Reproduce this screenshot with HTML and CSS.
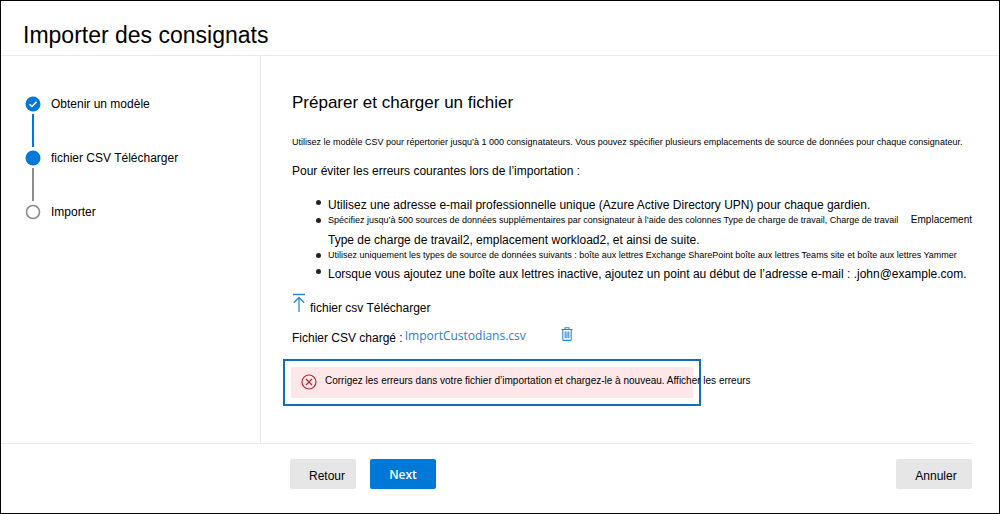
FILE: index.html
```html
<!DOCTYPE html>
<html lang="fr">
<head>
<meta charset="utf-8">
<meta name="viewport" content="width=device-width, initial-scale=1">
<title>Importer des consignats</title>
<link rel="stylesheet" href="styles.css">
</head>
<body>
<div class="wizard">
  <header class="header"><h1 class="title">Importer des consignats</h1></header>
  <div class="body">
    <nav class="sidebar" aria-label="Étapes">
      <ol class="steps">
        <li class="step step-done">
          <svg class="marker" viewBox="0 0 16 16" aria-hidden="true"><circle cx="8" cy="8" r="7.5" fill="#0078d7"/><path d="M4.600 8.200 7 10.500 11.600 5.800" fill="none" stroke="#fff" stroke-width="1.500"/></svg>
          <span>Obtenir un modèle</span>
        </li>
        <li class="step step-current" aria-current="step">
          <svg class="marker" viewBox="0 0 16 16" aria-hidden="true"><circle cx="8" cy="8" r="7.5" fill="#0078d7"/></svg>
          <span>fichier CSV Télécharger</span>
        </li>
        <li class="step">
          <svg class="marker" viewBox="0 0 16 16" aria-hidden="true"><circle cx="8" cy="8" r="6.5" fill="#fff" stroke="#8c8c8c" stroke-width="1.6"/></svg>
          <span>Importer</span>
        </li>
      </ol>
    </nav>
    <main class="content">
      <h2 class="heading">Préparer et charger un fichier</h2>
      <p class="intro">Utilisez le modèle CSV pour répertorier jusqu’à 1 000 consignatateurs. Vous pouvez spécifier plusieurs emplacements de source de données pour chaque consignateur.</p>
      <p class="lead">Pour éviter les erreurs courantes lors de l’importation :</p>
      <ul class="tips">
        <li class="tip">Utilisez une adresse e-mail professionnelle unique (Azure Active Directory UPN) pour chaque gardien.</li>
        <li class="tip tip-small">
          <div class="split"><span>Spécifiez jusqu’à 500 sources de données supplémentaires par consignateur à l’aide des colonnes Type de charge de travail, Charge de travail</span><span class="location">Emplacement</span></div>
          <div class="continued">Type de charge de travail2, emplacement workload2, et ainsi de suite.</div>
        </li>
        <li class="tip tip-small">Utilisez uniquement les types de source de données suivants : boîte aux lettres Exchange SharePoint boîte aux lettres Teams site et boîte aux lettres Yammer</li>
        <li class="tip tip-last">Lorsque vous ajoutez une boîte aux lettres inactive, ajoutez un point au début de l’adresse e-mail : .john@example.com.</li>
      </ul>
      <button class="upload" type="button">
        <svg class="upload-icon" viewBox="0 0 14 20" aria-hidden="true"><path d="M1 1.5H13M7 19V4.500M1.800 9.700 7 4.500 12.200 9.700" fill="none" stroke="#2b88d8" stroke-width="1.3"/></svg>
        <span>fichier csv Télécharger</span>
      </button>
      <div class="file">
        <span class="file-label">Fichier CSV chargé :</span>
        <a class="file-link" href="#">ImportCustodians.csv</a>
        <button class="delete" type="button" aria-label="Supprimer">
          <svg class="trash" viewBox="0 0 12 14" aria-hidden="true"><path d="M.5 2.500H11.500M4 2.500V.800H8V2.500M1.800 2.500V12.400Q1.800 13.400 2.800 13.400H9.200Q10.200 13.400 10.200 12.400V2.500M4.200 4.500V11.300M6 4.500V11.300M7.800 4.500V11.300" fill="none" stroke="#2b88d8" stroke-width="1.100"/></svg>
        </button>
      </div>
      <div class="alert-frame">
        <div class="alert" role="alert">
          <svg class="alert-icon" viewBox="0 0 16 16" aria-hidden="true"><path d="M8 1A7 7 0 1 1 8 15A7 7 0 1 1 8 1M5 5 11 11M11 5 5 11" fill="none" stroke="#b02a37" stroke-width="1.200"/></svg>
          <span class="alert-text">Corrigez les erreurs dans votre fichier d’importation et chargez-le à nouveau. Afficher les erreurs</span>
        </div>
      </div>
    </main>
  </div>
  <footer class="footer">
    <button class="btn btn-back" type="button">Retour</button>
    <button class="btn btn-next" type="button">Next</button>
    <button class="btn btn-cancel" type="button">Annuler</button>
  </footer>
</div>
</body>
</html>
```
FILE: styles.css
```css
* { box-sizing: border-box; }
body {
  margin: 0;
  background: #fff;
  color: #000;
  font: 12px/18px "Liberation Sans", Arial, sans-serif;
}
h1, h2, p, ul, ol { margin: 0; padding: 0; font-weight: 400; }
ul, ol { list-style: none; }
button { font: inherit; color: inherit; border: 0; background: none; padding: 0; cursor: pointer; }
svg { display: block; flex: none; }

.wizard {
  display: flex;
  flex-direction: column;
  min-height: 100vh;
  border: 1px solid #000;
}
.header { padding: 20px 22px 6px; border-bottom: 1px solid #eaeaea; }
.title { font-size: 23px; line-height: 28px; }

.body { display: flex; flex: 1; margin-right: 27px; border-bottom: 1px solid #eaeaea; }
.sidebar { flex: none; width: 260px; padding: 39px 24px; border-right: 1px solid #eaeaea; }
.step { position: relative; display: flex; align-items: flex-start; gap: 10px; height: 54px; line-height: 18px; }
.marker { width: 16px; height: 16px; margin-top: 1px; }
.step:not(:last-child)::after {
  content: "";
  position: absolute;
  left: 7px;
  top: 19px;
  width: 2px;
  height: 33px;
  background: #8c8c8c;
}
.step.step-done:not(:last-child)::after { background: #0078d7; }

.content { flex: 1; min-width: 0; padding: 35px 0 36px 31px; }
.heading { font-size: 17px; line-height: 24px; }
.intro { margin-top: 19px; font-size: 9px; line-height: 16px; white-space: nowrap; }
.lead { margin-top: 12px; }
.tips { margin-top: 16px; padding-left: 36px; white-space: nowrap; }
.tip { position: relative; }
.tip::before {
  content: "";
  position: absolute;
  left: -12px;
  top: 4px;
  width: 5px;
  height: 5px;
  border-radius: 50%;
  background: #222;
}
.tip-small { font-size: 9px; line-height: 12px; }
.split { display: flex; justify-content: space-between; }
.location { font-size: 10px; }
.continued { margin-top: 5px; font-size: 12px; line-height: 18px; }
.tip-last { margin-top: 4px; }

.upload { display: flex; align-items: flex-start; gap: 4px; margin-top: 10px; }
.upload span { margin-top: 6px; }
.upload-icon { width: 14px; height: 20px; }
.file { display: flex; align-items: flex-start; margin-top: 10px; }
.file-label { padding-top: 2px; }
.file-link { margin-left: 2px; color: #2b7cd3; font: 12px/18px "Open Sans", "Noto Sans", sans-serif; text-decoration: none; }
.delete { margin-left: 35px; }
.trash { width: 12px; height: 14px; }

.alert-frame { width: 418px; max-width: 100%; margin: 12px 0 0 -9px; padding: 6px; border: 2px solid #106ebe; }
.alert { display: flex; align-items: flex-start; gap: 8px; min-height: 31px; padding: 7px 10px; background: #fde7e9; white-space: nowrap; }
.alert-icon { width: 16px; height: 16px; }
.alert-text { font-size: 10px; line-height: 14px; }

.footer { display: flex; gap: 14px; padding: 15px 27px 24px 289px; }
.btn { height: 30px; padding-top: 4px; border-radius: 2px; background: #e6e6e6; }
.btn-back { width: 66px; padding-left: 8px; }
.btn-next { width: 66px; padding-top: 2px; background: #0078d7; color: #fff; font: 600 12px/18px "Open Sans", "Noto Sans", sans-serif; }
.btn-cancel { width: 76px; margin-left: auto; padding-left: 4px; }
```
